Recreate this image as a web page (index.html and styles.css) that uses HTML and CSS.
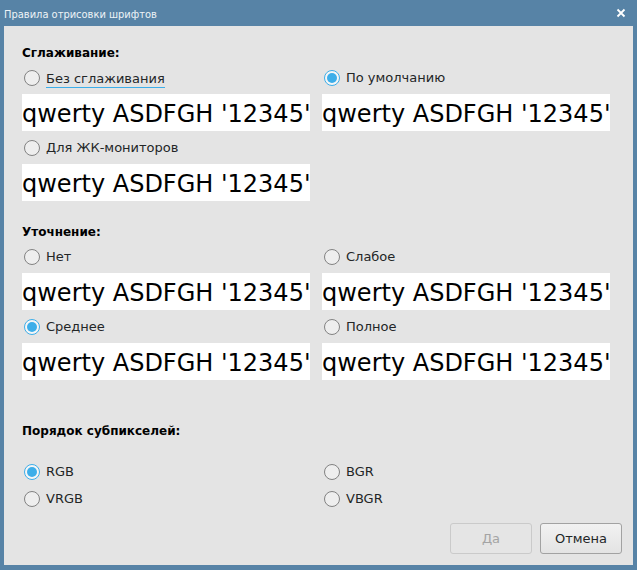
FILE: index.html
```html
<!DOCTYPE html>
<html lang="ru">
<head>
<meta charset="utf-8">
<title>Правила отрисовки шрифтов</title>
<link rel="stylesheet" href="styles.css">
</head>
<body>
<div class="window">
  <div class="titlebar">
    <span class="title">Правила отрисовки шрифтов</span>
    <svg class="close" width="10" height="10" viewBox="0 0 10 10"><path d="M1.5 1.5 L8.5 8.5 M8.5 1.5 L1.5 8.5" stroke="#ffffff" stroke-width="1.8" fill="none"/></svg>
  </div>
  <div class="content">
    <div class="heading">Сглаживание:</div>
    <div class="grid">
      <div class="cell">
        <div class="option"><span class="radio"></span><span class="label focus">Без сглаживания</span></div>
        <div class="sample">qwerty ASDFGH '12345'</div>
      </div>
      <div class="cell">
        <div class="option"><span class="radio checked"></span><span class="label">По умолчанию</span></div>
        <div class="sample">qwerty ASDFGH '12345'</div>
      </div>
      <div class="cell">
        <div class="option"><span class="radio"></span><span class="label">Для ЖК-мониторов</span></div>
        <div class="sample">qwerty ASDFGH '12345'</div>
      </div>
    </div>

    <div class="heading h2">Уточнение:</div>
    <div class="grid">
      <div class="cell">
        <div class="option"><span class="radio"></span><span class="label">Нет</span></div>
        <div class="sample">qwerty ASDFGH '12345'</div>
      </div>
      <div class="cell">
        <div class="option"><span class="radio"></span><span class="label">Слабое</span></div>
        <div class="sample">qwerty ASDFGH '12345'</div>
      </div>
      <div class="cell">
        <div class="option"><span class="radio checked"></span><span class="label">Среднее</span></div>
        <div class="sample">qwerty ASDFGH '12345'</div>
      </div>
      <div class="cell">
        <div class="option"><span class="radio"></span><span class="label">Полное</span></div>
        <div class="sample">qwerty ASDFGH '12345'</div>
      </div>
    </div>

    <div class="heading h3">Порядок субпикселей:</div>
    <div class="grid small">
      <div class="option short"><span class="radio checked"></span><span class="label">RGB</span></div>
      <div class="option short"><span class="radio"></span><span class="label">BGR</span></div>
      <div class="option short"><span class="radio"></span><span class="label">VRGB</span></div>
      <div class="option short"><span class="radio"></span><span class="label">VBGR</span></div>
    </div>

    <div class="buttons">
      <button class="btn disabled" type="button">Да</button>
      <button class="btn" type="button">Отмена</button>
    </div>
  </div>
</div>
</body>
</html>
```

FILE: styles.css
```css
html, body {
  margin: 0;
  padding: 0;
}
body {
  font-family: "DejaVu Sans", "Liberation Sans", sans-serif;
  font-size: 13px;
  color: #232627;
  background: #5783a6;
}
.window {
  width: 637px;
  height: 570px;
  background: #5783a6;
  display: flex;
  flex-direction: column;
}
.titlebar {
  height: 26px;
  display: flex;
  align-items: center;
  justify-content: space-between;
  padding: 0 11px 0 4px;
}
.title {
  font-family: "DejaVu Sans Condensed", "DejaVu Sans", sans-serif;
  font-size: 11px;
  color: #eef3f7;
  position: relative;
  top: 1px;
}
.close {
  display: block;
}
.content {
  margin: 0 4px 5px 4px;
  height: 539px;
  box-sizing: border-box;
  background: #e4e4e4;
  padding: 19px 11px 0 18px;
}
.heading {
  height: 16px;
  line-height: 16px;
  font-size: 12px;
  font-weight: bold;
  color: #000;
}
.h2 { margin-top: 23px; }
.h3 { margin-top: 43px; }
.grid {
  display: grid;
  grid-template-columns: 300px 300px;
}
.grid.small {
  margin-top: 19px;
}
.option {
  height: 33px;
  display: flex;
  align-items: center;
  padding-left: 2px;
}
.option.short {
  height: 27px;
}
.radio {
  width: 16px;
  height: 16px;
  box-sizing: border-box;
  border-radius: 50%;
  border: 1px solid #828282;
  background: #eeeeee;
  margin-right: 6px;
  flex: none;
  position: relative;
}
.radio.checked {
  border-color: #3daee9;
  background: #f6f6f6;
}
.radio.checked::after {
  content: "";
  position: absolute;
  left: 2px;
  top: 2px;
  width: 10px;
  height: 10px;
  border-radius: 50%;
  background: #3daee9;
}
.label {
  line-height: 15px;
}
.label.focus {
  border-bottom: 1px solid #3daee9;
  padding-bottom: 1px;
  margin-top: 3px;
}
.sample {
  width: 288px;
  height: 37px;
  box-sizing: border-box;
  background: #ffffff;
  color: #000;
  font-size: 24px;
  line-height: 33px;
  padding-top: 4px;
  white-space: nowrap;
  overflow: hidden;
}
.buttons {
  margin-top: 11px;
  display: flex;
  justify-content: flex-end;
  gap: 8px;
}
.btn {
  width: 82px;
  height: 31px;
  box-sizing: border-box;
  font-family: "DejaVu Sans", "Liberation Sans", sans-serif;
  font-size: 13px;
  color: #232627;
  border: 1px solid #a2a2a2;
  border-radius: 3px;
  background: linear-gradient(#f2f2f2, #e3e3e3);
  padding: 0;
}
.btn.disabled {
  color: #a4a4a4;
  border-color: #cacaca;
  background: #e5e5e5;
}
```
